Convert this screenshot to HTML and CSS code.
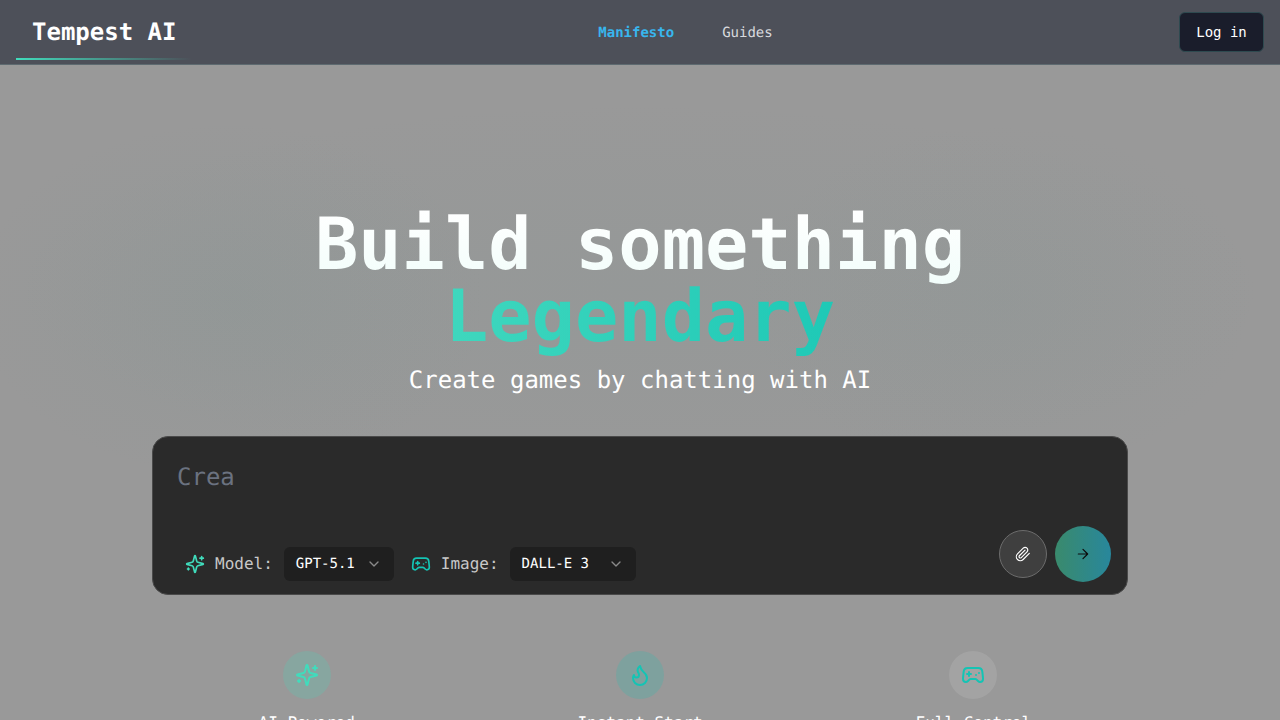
FILE: index.html
```html
<!DOCTYPE html>
<html lang="en">

<head>
	<meta charset="UTF-8">
	<title>Tempest AI</title>
	<link rel="stylesheet" href="styles.css">
</head>

<body>
	<header class="topbar">
		<a class="logo">Tempest AI</a>
		<nav class="nav">
			<a class="nav-link active">Manifesto</a>
			<a class="nav-link">Guides</a>
		</nav>
		<button class="login">Log in</button>
	</header>

	<main class="hero">
		<h1 class="title">
			<span class="title-top">Build something</span>
			<span class="title-accent">Legendary</span>
		</h1>
		<p class="subtitle">Create games by chatting with AI</p>

		<section class="prompt">
			<div class="prompt-input">Crea</div>
			<div class="prompt-bar">
				<div class="pickers">
					<svg class="icon icon-20 mint" viewBox="0 0 24 24">
						<path d="M9.937 15.5A2 2 0 0 0 8.5 14.063l-6.135-1.582a.5.5 0 0 1 0-.962L8.5 9.936A2 2 0 0 0 9.937 8.5l1.582-6.135a.5.5 0 0 1 .963 0L14.063 8.5A2 2 0 0 0 15.5 9.937l6.135 1.581a.5.5 0 0 1 0 .964L15.5 14.063a2 2 0 0 0-1.437 1.437l-1.582 6.135a.5.5 0 0 1-.963 0z" />
						<path d="M20 3v4M22 5h-4M4 17v2M5 18H3" />
					</svg>
					<span class="picker-label">Model:</span>
					<div class="picker picker-model">
						<span>GPT-5.1</span>
						<svg class="icon chevron" viewBox="0 0 24 24"><path d="m6 9 6 6 6-6" /></svg>
					</div>
					<svg class="icon icon-20 teal picker-second" viewBox="0 0 24 24">
						<path d="M6 11h4M8 9v4M15 12h.01M18 10h.01" />
						<path d="M17.32 5H6.68a4 4 0 0 0-3.978 3.59c-.006.052-.01.101-.017.152C2.604 9.416 2 14.456 2 16a3 3 0 0 0 3 3c1 0 1.5-.5 2-1l1.414-1.414A2 2 0 0 1 9.828 16h4.344a2 2 0 0 1 1.414.586L17 18c.5.5 1 1 2 1a3 3 0 0 0 3-3c0-1.545-.604-6.584-.685-7.258-.007-.05-.011-.1-.017-.151A4 4 0 0 0 17.32 5z" />
					</svg>
					<span class="picker-label">Image:</span>
					<div class="picker picker-image">
						<span>DALL-E 3</span>
						<svg class="icon chevron" viewBox="0 0 24 24"><path d="m6 9 6 6 6-6" /></svg>
					</div>
				</div>
				<div class="actions">
					<button class="attach">
						<svg class="icon icon-16" viewBox="0 0 24 24">
							<path d="m21.44 11.05-9.19 9.19a6 6 0 0 1-8.49-8.49l8.57-8.57A4 4 0 1 1 18 8.84l-8.59 8.57a2 2 0 0 1-2.83-2.83l8.49-8.48" />
						</svg>
					</button>
					<button class="send">
						<svg class="icon icon-16" viewBox="0 0 24 24"><path d="M5 12h14M12 5l7 7-7 7" /></svg>
					</button>
				</div>
			</div>
		</section>

		<section class="features">
			<div class="feature">
				<div class="feature-icon tint-mint">
					<svg class="icon icon-24 mint" viewBox="0 0 24 24">
						<path d="M9.937 15.5A2 2 0 0 0 8.5 14.063l-6.135-1.582a.5.5 0 0 1 0-.962L8.5 9.936A2 2 0 0 0 9.937 8.5l1.582-6.135a.5.5 0 0 1 .963 0L14.063 8.5A2 2 0 0 0 15.5 9.937l6.135 1.581a.5.5 0 0 1 0 .964L15.5 14.063a2 2 0 0 0-1.437 1.437l-1.582 6.135a.5.5 0 0 1-.963 0z" />
						<path d="M20 3v4M22 5h-4M4 17v2M5 18H3" />
					</svg>
				</div>
				<span class="feature-label">AI Powered</span>
			</div>
			<div class="feature">
				<div class="feature-icon tint-teal">
					<svg class="icon icon-24 teal" viewBox="0 0 24 24">
						<path d="M8.5 14.5A2.5 2.5 0 0 0 11 12c0-1.38-.5-2-1-3-1.072-2.143-.224-4.054 2-6 .5 2.5 2 4.9 4 6.5 2 1.6 3 3.5 3 5.5a7 7 0 1 1-14 0c0-1.153.433-2.294 1-3a2.5 2.5 0 0 0 2.5 2.5z" />
					</svg>
				</div>
				<span class="feature-label">Instant Start</span>
			</div>
			<div class="feature">
				<div class="feature-icon tint-grey">
					<svg class="icon icon-24 teal" viewBox="0 0 24 24">
						<path d="M6 11h4M8 9v4M15 12h.01M18 10h.01" />
						<path d="M17.32 5H6.68a4 4 0 0 0-3.978 3.59c-.006.052-.01.101-.017.152C2.604 9.416 2 14.456 2 16a3 3 0 0 0 3 3c1 0 1.5-.5 2-1l1.414-1.414A2 2 0 0 1 9.828 16h4.344a2 2 0 0 1 1.414.586L17 18c.5.5 1 1 2 1a3 3 0 0 0 3-3c0-1.545-.604-6.584-.685-7.258-.007-.05-.011-.1-.017-.151A4 4 0 0 0 17.32 5z" />
					</svg>
				</div>
				<span class="feature-label">Full Control</span>
			</div>
		</section>
	</main>
</body>

</html>
```

FILE: styles.css
```css
* {
	box-sizing: border-box;
}

html,
body {
	height: 100%;
	margin: 0;
	overflow: hidden;
}

body {
	font-family: "DejaVu Sans Mono", monospace;
	text-rendering: geometricPrecision;
	color: #fff;
	background-color: #999;
	background-image:
		radial-gradient(ellipse 260px 180px at 230px 300px, rgba(100, 140, 135, 0.1), rgba(100, 140, 135, 0)),
		radial-gradient(ellipse 260px 180px at 1000px 300px, rgba(100, 140, 135, 0.07), rgba(100, 140, 135, 0)),
		radial-gradient(ellipse 640px 190px at 640px 290px, rgba(100, 140, 135, 0.08), rgba(100, 140, 135, 0));
}

.icon {
	display: block;
	fill: none;
	stroke: currentColor;
	stroke-width: 2;
	stroke-linecap: round;
	stroke-linejoin: round;
	flex: none;
}

.icon-16 {
	width: 16px;
	height: 16px;
}

.icon-20 {
	width: 20px;
	height: 20px;
}

.icon-24 {
	width: 24px;
	height: 24px;
}

.mint {
	color: #40dcbc;
}

.teal {
	color: #14c4b4;
}

/* top bar */
.topbar {
	display: flex;
	justify-content: space-between;
	align-items: center;
	height: 65px;
	padding: 0 16px;
	background-color: #4d5059;
	border-bottom: 1px solid #5e6a70;
}

.logo {
	width: 176px;
	height: 64px;
	padding: 0 16px;
	font-size: 24px;
	font-weight: 700;
	line-height: 64px;
	white-space: nowrap;
	background: linear-gradient(90deg, #40dcbc, rgba(64, 220, 188, 0)) no-repeat 0 58px / 100% 2px;
}

.nav {
	display: flex;
	gap: 48px;
	padding-top: 1px;
	font-size: 14px;
	line-height: 20px;
}

.nav-link {
	color: #d8dade;
}

.nav-link.active {
	color: #38b6ee;
	font-weight: 700;
}

.login {
	width: 85px;
	height: 40px;
	padding: 0;
	font-family: inherit;
	font-size: 14px;
	color: #fff;
	background-color: #1a1d2b;
	border: 1px solid #2e4a50;
	border-radius: 6px;
}

/* hero */
.hero {
	display: flex;
	flex-direction: column;
	align-items: center;
	padding-top: 143px;
}

.title {
	margin: 0;
	font-size: 72px;
	font-weight: 700;
	line-height: 72px;
	text-align: center;
}

.title-top,
.title-accent {
	display: block;
	background-clip: text;
	-webkit-background-clip: text;
	color: transparent;
}

.title-top {
	padding-bottom: 12px;
	margin-bottom: -12px;
	background-image: linear-gradient(180deg, #fff, #f0fdfa);
}

.title-accent {
	padding-bottom: 12px;
	background-image: linear-gradient(90deg, #4adcc0, #14c4b4);
}

.subtitle {
	margin: 0;
	font-size: 24px;
	line-height: 32px;
}

/* prompt card */
.prompt {
	width: 976px;
	height: 159px;
	margin-top: 40px;
	padding: 24px 16px 12px 24px;
	display: flex;
	flex-direction: column;
	justify-content: space-between;
	background-color: #2a2a2a;
	border: 1px solid #4a4a4a;
	border-radius: 16px;
}

.prompt-input {
	font-size: 24px;
	line-height: 32px;
	color: #6b7280;
}

.prompt-bar {
	display: flex;
	align-items: flex-end;
	justify-content: space-between;
}

.pickers {
	display: flex;
	align-items: center;
	gap: 10px;
	margin-bottom: 1px;
	padding-left: 8px;
}

.picker-label {
	font-size: 16px;
	line-height: 24px;
	color: #c8c8c8;
}

.picker {
	display: flex;
	align-items: center;
	justify-content: space-between;
	height: 34px;
	margin-left: 1px;
	padding: 0 12px;
	font-size: 14px;
	background-color: #1f1f1f;
	border-radius: 6px;
}

.picker-model {
	width: 110px;
}

.picker-image {
	width: 126px;
}

.picker-second {
	margin-left: 7px;
}

.chevron {
	width: 16px;
	height: 16px;
	color: #8a8a8a;
}

.actions {
	display: flex;
	align-items: center;
	gap: 8px;
}

.attach,
.send {
	display: flex;
	align-items: center;
	justify-content: center;
	padding: 0;
	border-radius: 50%;
}

.attach {
	width: 48px;
	height: 48px;
	color: #fff;
	background-color: #3f3f3f;
	border: 1px solid #6c6c6c;
}

.attach .icon {
	stroke-width: 1.75;
}

.send {
	width: 56px;
	height: 56px;
	color: #0c0c0c;
	background-image: linear-gradient(90deg, #3a8a6c, #28879c);
	border: 0;
}

.send .icon {
	stroke-width: 1.85;
}

/* features row */
.features {
	display: grid;
	grid-template-columns: repeat(3, 1fr);
	width: 1000px;
	margin-top: 56px;
}

.feature {
	display: flex;
	flex-direction: column;
	align-items: center;
	gap: 12px;
}

.feature-icon {
	display: flex;
	align-items: center;
	justify-content: center;
	width: 48px;
	height: 48px;
	border-radius: 50%;
}

.tint-mint {
	background-color: rgba(64, 220, 188, 0.2);
}

.tint-teal {
	background-color: rgba(20, 196, 180, 0.2);
}

.tint-grey {
	background-color: rgba(255, 255, 255, 0.1);
}

.feature-label {
	font-size: 16px;
	line-height: 24px;
}
```
